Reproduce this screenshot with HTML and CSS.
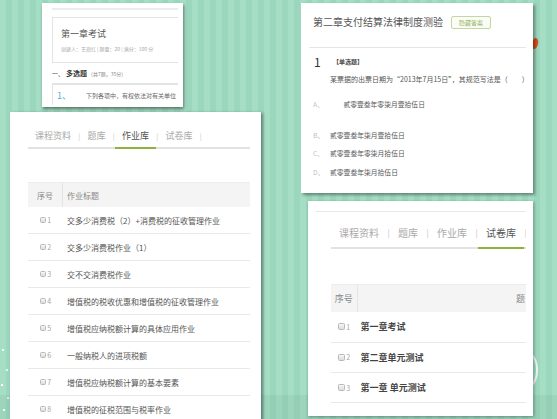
FILE: index.html
```html
<!DOCTYPE html>
<html lang="zh-CN">
<head>
<meta charset="utf-8">
<title>课程资料</title>
<link rel="stylesheet" href="styles.css">
</head>
<body>
<div class="canvas">
  <div class="band"></div>
  <div class="deco-orange"></div>
  <div class="deco-arc"></div>
  <div class="sparkle"></div>

  <section class="card card-exam">
    <div class="exam-inner">
      <div class="exam-topline"></div>
      <div class="exam-head">
        <div class="exam-title">第一章考试</div>
        <div class="exam-meta">创建人：王燕红 | 题量：20 | 满分：100 分</div>
      </div>
      <div class="exam-section"><span class="sec-no">一、</span><b class="sec-name">多选题</b><span class="sec-info">（共7题，35分）</span></div>
      <div class="exam-q"><span class="exam-qno">1、</span><span class="exam-qtext">下列各项中，有权依法对有关单位</span></div>
    </div>
  </section>

  <section class="card card-hw">
    <div class="hw-inner">
      <nav class="tabs tabs-sm">
        <span class="tab">课程资料</span><span class="sep">|</span><span class="tab">题库</span><span class="sep">|</span><span class="tab active">作业库</span><span class="sep">|</span><span class="tab">试卷库</span><span class="sep">|</span>
      </nav>
      <div class="grid hw-grid">
        <div class="row head"><div class="c1">序号</div><div class="c2">作业标题</div></div>
        <div class="row"><div class="c1"><i class="cb"></i><span class="no">1</span></div><div class="c2">交多少消费税（2）+消费税的征收管理作业</div></div>
        <div class="row"><div class="c1"><i class="cb"></i><span class="no">2</span></div><div class="c2">交多少消费税作业（1）</div></div>
        <div class="row"><div class="c1"><i class="cb"></i><span class="no">3</span></div><div class="c2">交不交消费税作业</div></div>
        <div class="row"><div class="c1"><i class="cb"></i><span class="no">4</span></div><div class="c2">增值税的税收优惠和增值税的征收管理作业</div></div>
        <div class="row"><div class="c1"><i class="cb"></i><span class="no">5</span></div><div class="c2">增值税应纳税额计算的具体应用作业</div></div>
        <div class="row"><div class="c1"><i class="cb"></i><span class="no">6</span></div><div class="c2">一般纳税人的进项税额</div></div>
        <div class="row"><div class="c1"><i class="cb"></i><span class="no">7</span></div><div class="c2">增值税应纳税额计算的基本要素</div></div>
        <div class="row"><div class="c1"><i class="cb"></i><span class="no">8</span></div><div class="c2">增值税的征税范围与税率作业</div></div>
      </div>
    </div>
  </section>

  <section class="card card-quiz">
    <div class="quiz-head">
      <h2 class="quiz-title">第二章支付结算法律制度测验</h2>
      <span class="quiz-btn">隐藏答案</span>
    </div>
    <div class="quiz-divider"></div>
    <div class="q-top"><span class="q-num">1</span><span class="q-type">【单选题】</span></div>
    <div class="q-text">某票据的出票日期为“2013年7月15日”，其规范写法是（　　）</div>
    <div class="opt opt-a"><span class="opt-l">A、</span><span class="opt-t">贰零壹叁年零柒月壹拾伍日</span></div>
    <div class="opt opt-b"><span class="opt-l">B、</span><span class="opt-t">贰零壹叁年柒月壹拾伍日</span></div>
    <div class="opt opt-c"><span class="opt-l">C、</span><span class="opt-t">贰零壹叁年零柒月拾伍日</span></div>
    <div class="opt opt-d"><span class="opt-l">D、</span><span class="opt-t">贰零壹叁年柒月拾伍日</span></div>
  </section>

  <section class="card card-paper">
    <div class="paper-topline"></div>
    <div class="paper-inner">
      <nav class="tabs tabs-lg">
        <span class="tab">课程资料</span><span class="sep">|</span><span class="tab">题库</span><span class="sep">|</span><span class="tab">作业库</span><span class="sep">|</span><span class="tab active">试卷库</span><span class="sep">|</span>
      </nav>
      <div class="grid paper-grid">
        <div class="row head"><div class="c1">序号</div><div class="c2">题</div></div>
        <div class="row"><div class="c1"><i class="cb"></i><span class="no">1</span></div><div class="c2">第一章考试</div></div>
        <div class="row"><div class="c1"><i class="cb"></i><span class="no">2</span></div><div class="c2">第二章单元测试</div></div>
        <div class="row"><div class="c1"><i class="cb"></i><span class="no">3</span></div><div class="c2">第一章 单元测试</div></div>
      </div>
    </div>
  </section>
</div>
</body>
</html>
```

FILE: styles.css
```css
* { box-sizing: border-box; }
html, body { margin: 0; padding: 0; }
body {
  width: 557px;
  height: 419px;
  overflow: hidden;
  font-family: "Noto Sans CJK SC", "Noto Sans", sans-serif;
  color: #555;
}
.canvas {
  position: relative;
  width: 557px;
  height: 419px;
  overflow: hidden;
  background:
    repeating-linear-gradient(90deg, #a5ddc5 0 6px, #9bd7bd 6px 12px);
}
.band {
  position: absolute;
  left: 0; right: 0; top: 395px; bottom: 0;
  background: rgba(70, 120, 100, 0.09);
}
.deco-orange {
  position: absolute;
  left: 532px; top: 38px;
  width: 6px; height: 11px;
  background: #d8501c;
  border-radius: 40% 60% 50% 50%;
  transform: rotate(18deg);
}
.deco-arc {
  position: absolute;
  left: 514px; top: 345px;
  width: 24px; height: 50px;
  border: 2px solid #eef3f1;
  border-left: none;
  border-radius: 0 25px 25px 0;
}
.sparkle {
  position: absolute;
  left: 0; top: 340px;
  width: 12px; height: 79px;
  background:
    radial-gradient(circle at 3px 10px, #e8fff7 0 1px, transparent 1.6px),
    radial-gradient(circle at 7px 30px, #d4fbef 0 1px, transparent 1.6px),
    radial-gradient(circle at 2px 45px, #ffffff 0 1px, transparent 1.6px),
    radial-gradient(circle at 8px 58px, #c6f3e6 0 1px, transparent 1.6px),
    radial-gradient(circle at 4px 70px, #e8fff7 0 1px, transparent 1.6px);
}

.card {
  position: absolute;
  background: #fff;
  overflow: hidden;
}

/* ---------- panel 1: exam ---------- */
.card-exam {
  left: 42px; top: 3px;
  width: 141px; height: 104px;
  box-shadow: 1px 2px 3px rgba(0,0,0,0.45);
}
.exam-inner {
  margin-left: 10px;
  width: 126px;
  overflow: hidden;
}
.exam-topline {
  margin-top: 5px;
  height: 2px;
  background: #ececec;
}
.exam-head {
  margin-top: 7px;
  width: 150px;
  height: 46px;
  border: 1px solid #e3e3e3;
  padding: 10px 0 0 8px;
}
.exam-title {
  font-size: 9px;
  line-height: 12px;
  color: #555;
}
.exam-meta {
  margin-top: 6px;
  font-size: 5px;
  line-height: 6px;
  color: #aaa;
  white-space: nowrap;
}
.exam-section {
  margin-top: 5px;
  height: 10px;
  line-height: 10px;
  white-space: nowrap;
  display: flex;
  align-items: baseline;
}
.sec-no { font-size: 6px; color: #444; }
.sec-name { font-size: 7px; color: #333; margin-left: 2px; }
.sec-info { font-size: 5px; color: #888; margin-left: 1px; }
.exam-q {
  margin-top: 5px;
  width: 150px;
  height: 22px;
  border-top: 2px solid #e4e4e4;
  border-left: 1px solid #e4e4e4;
  padding: 1px 0 0 4px;
  display: flex;
  align-items: center;
  white-space: nowrap;
}
.exam-qno {
  font-size: 9px;
  color: #4aaee6;
  width: 29px;
}
.exam-qtext {
  font-size: 6px;
  color: #666;
}

/* ---------- tabs ---------- */
.tabs {
  display: flex;
  white-space: nowrap;
  border-bottom: 2px solid #e2e2e2;
}
.tab {
  color: #aaa;
  flex: none;
}
.tab.active {
  color: #555;
  border-bottom: 2px solid #8db33f;
  margin-bottom: -2px;
}
.sep {
  color: #c4c4c4;
  flex: none;
  text-align: center;
}
.tabs-sm { margin-top: 13px; font-size: 9px; line-height: 22px; }
.tabs-sm .tab { padding: 0 7px; }
.tabs-sm .sep { width: 2.5px; font-size: 7px; }
.tabs-lg { margin-top: 6.6px; font-size: 10px; line-height: 28px; }
.tabs-lg .tab { padding: 0 8px; }
.tabs-lg .sep { width: 3px; font-size: 8px; }

/* ---------- tables ---------- */
.grid { display: flex; flex-direction: column; }
.row {
  display: flex;
  align-items: center;
  border-bottom: 1px solid #e9e9e9;
  white-space: nowrap;
}
.row.head {
  background: #f4f4f4;
  border-top: 1px solid #ececec;
  border-bottom: none;
  color: #888;
}
.row.head .c1 {
  align-self: stretch;
  display: flex;
  align-items: center;
  justify-content: center;
  border-right: 1px solid #e4e4e4;
}
.c1 {
  flex: none;
  display: flex;
  align-items: center;
  justify-content: center;
}
.c2 { flex: 1; }
.cb {
  display: inline-block;
  border: 1px solid #b8b8b8;
  border-radius: 1.5px;
  background: linear-gradient(#f7f7f7, #dcdcdc);
}
.no { color: #a5a5a5; margin-left: 1px; }

/* ---------- panel 2: homework ---------- */
.card-hw {
  left: 10px; top: 112px;
  width: 251px; height: 320px;
  box-shadow: 2px 1px 3px rgba(0,0,0,0.4);
}
.hw-inner {
  margin-left: 18px;
  width: 222px;
}
.hw-grid { margin-top: 33px; }
.hw-grid .row { height: 27px; font-size: 8px; }
.hw-grid .row.head { height: 25px; }
.hw-grid .c1 { width: 35px; }
.hw-grid .c2 { padding-left: 4px; color: #555; }
.hw-grid .row.head .c2 { color: #888; }
.hw-grid .cb { width: 6.5px; height: 6.5px; }
.hw-grid .no { font-size: 7px; }

/* ---------- panel 3: quiz ---------- */
.card-quiz {
  left: 301px; top: 3px;
  width: 232px; height: 190px;
  box-shadow: 2px 2px 3px rgba(0,0,0,0.4);
}
.quiz-head {
  display: flex;
  align-items: center;
  padding: 12px 0 0 12px;
  height: 26px;
}
.quiz-title {
  margin: 0;
  font-size: 10px;
  font-weight: normal;
  line-height: 14px;
  color: #555;
  white-space: nowrap;
}
.quiz-btn {
  margin-left: 8px;
  height: 13px;
  width: 40px;
  border: 1px solid #c3d7a2;
  border-radius: 2px;
  background: #fafcf5;
  color: #8fb061;
  font-size: 6px;
  line-height: 11px;
  text-align: center;
}
.quiz-divider {
  margin: 17.7px 7px 0 8px;
  border-top: 1px solid #e6e6e6;
}
.q-top {
  margin-top: 6.3px;
  height: 16px;
  padding-left: 13px;
  display: flex;
  align-items: center;
}
.q-num { font-size: 12px; color: #333; width: 19px; }
.q-type { font-size: 6px; color: #444; font-weight: bold; }
.q-text {
  margin-top: 3.7px;
  padding-left: 29px;
  font-size: 7px;
  line-height: 10px;
  color: #555;
  white-space: nowrap;
}
.opt {
  display: flex;
  padding-left: 12px;
  font-size: 6.8px;
  line-height: 10px;
  white-space: nowrap;
}
.opt-l { width: 17px; color: #c2c2c2; }
.opt-t { color: #555; }
.opt-a { margin-top: 15px; }
.opt-a .opt-t { padding-left: 13.4px; }
.opt-b { margin-top: 21.3px; }
.opt-c { margin-top: 8.3px; }
.opt-d { margin-top: 8.7px; }

/* ---------- panel 4: papers ---------- */
.card-paper {
  left: 308px; top: 201px;
  width: 225px; height: 215px;
  box-shadow: 1px 1px 3px rgba(0,0,0,0.35);
}
.paper-topline {
  margin: 10px 7px 0 8px;
  border-top: 1px solid #e8e8e8;
}
.paper-inner {
  margin-left: 23px;
  width: 195px;
  overflow: hidden;
}
.paper-grid { margin-top: 35.7px; }
.paper-grid .row { height: 30.3px; font-size: 9px; }
.paper-grid .row.head { height: 28px; }
.paper-grid .c1 { width: 26.6px; }
.paper-grid .row.head .c2 { text-align: right; padding-right: 1px; color: #888; font-weight: normal; }
.paper-grid .c2 { padding-left: 3px; color: #444; font-weight: bold; }
.paper-grid .cb { width: 7px; height: 7px; }
.paper-grid .no { font-size: 7px; }
```
